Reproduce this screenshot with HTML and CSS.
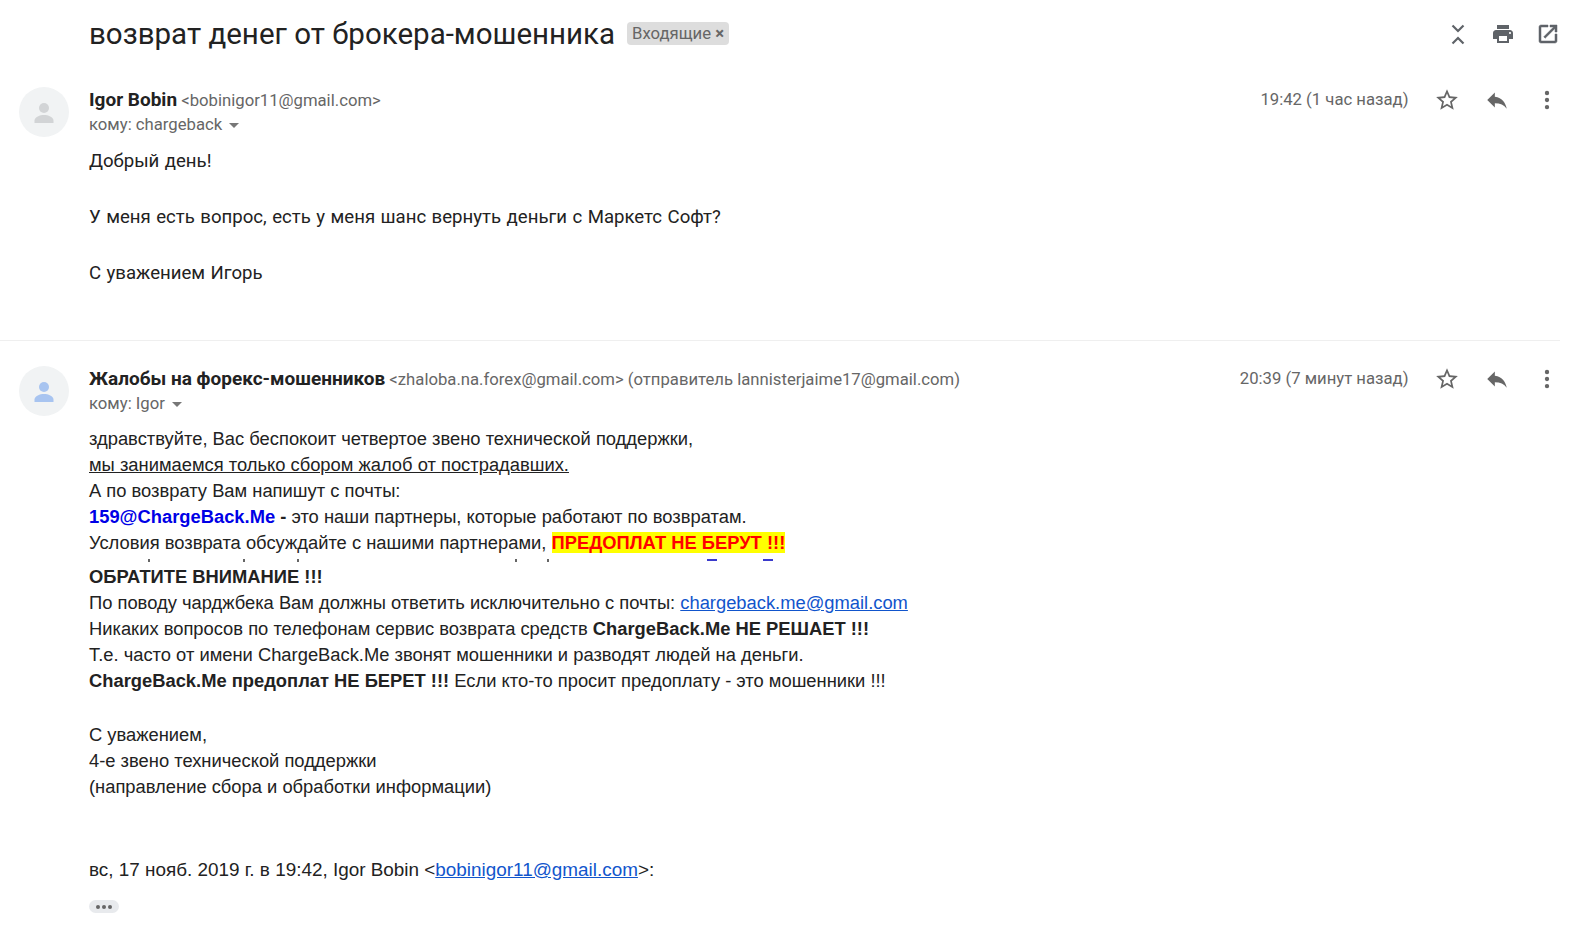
FILE: index.html
```html
<!DOCTYPE html>
<html lang="ru">
<head>
    <meta charset="UTF-8">
    <title>возврат денег от брокера-мошенника</title>
    <link rel="stylesheet" href="styles.css">
</head>
<body>
    <div class="thread">
        <div class="subject-row">
            <h1 class="subject">возврат денег от брокера-мошенника</h1>
            <span class="label">Входящие <span class="label-x">×</span></span>
            <div class="top-icons">
                <svg class="top-icon" viewBox="0 0 24 24"><path class="chevrons" d="M6.500 3.500L12 9 17.500 3.500M6.500 21.500L12 16 17.500 21.500"/></svg>
                <svg class="top-icon" viewBox="0 0 24 24"><path d="M19 8H5c-1.660 0-3 1.340-3 3v6h4v4h12v-4h4v-6c0-1.660-1.340-3-3-3zm-3 11H8v-5h8v5zm3-7c-.550 0-1-.450-1-1s.450-1 1-1 1 .450 1 1-.450 1-1 1zm-1-9H6v4h12V3z"/></svg>
                <svg class="top-icon open" viewBox="0 0 24 24"><path d="M19 19H5V5h7V3H5c-1.110 0-2 .900-2 2v14c0 1.100.890 2 2 2h14c1.100 0 2-.900 2-2v-7h-2v7zM14 3v2h3.590l-9.830 9.830 1.410 1.410L19 6.410V10h2V3h-7z"/></svg>
            </div>
        </div>

        <div class="message first">
            <svg class="avatar grey" viewBox="0 0 50 50"><circle cx="25" cy="25" r="25" fill="#f1f3f4"/><circle cx="25" cy="21" r="5"/><path d="M15.500 36v-2.500c0-3.500 5.500-5.500 9.500-5.500s9.500 2 9.500 5.500v2.500z"/></svg>
            <div class="content">
                <div class="head">
                    <div class="sender">
                        <div class="from"><b class="name">Igor Bobin</b> <span class="addr">&lt;bobinigor11@gmail.com&gt;</span></div>
                        <div class="to">кому: chargeback <span class="caret"></span></div>
                    </div>
                    <span class="time">19:42 (1 час назад)</span>
                    <svg class="act" viewBox="0 0 24 24"><path d="M22 9.240l-7.190-.620L12 2 9.190 8.630 2 9.240l5.460 4.730L5.820 21 12 17.270 18.180 21l-1.630-7.030L22 9.240zM12 15.400l-3.760 2.270 1-4.280-3.320-2.880 4.380-.380L12 6.100l1.710 4.040 4.380.380-3.320 2.880 1 4.280L12 15.400z"/></svg>
                    <svg class="act" viewBox="0 0 24 24"><path d="M10 9V5l-7 7 7 7v-4.100c5 0 8.500 1.600 11 5.100-1-5-4-10-11-11z"/></svg>
                    <svg class="act" viewBox="0 0 24 24"><circle cx="12" cy="5.500" r="2"/><circle cx="12" cy="12" r="2"/><circle cx="12" cy="18.500" r="2"/></svg>
                </div>
                <div class="plain">
                    <p>Добрый день!</p>
                    <p>У меня есть вопрос, есть у меня шанс вернуть деньги с Маркетс Софт?</p>
                    <p>С уважением Игорь</p>
                </div>
            </div>
        </div>

        <div class="message second">
            <svg class="avatar blue" viewBox="0 0 50 50"><circle cx="25" cy="25" r="25" fill="#f1f3f4"/><circle cx="25" cy="21" r="5"/><path d="M15.500 36v-2.500c0-3.500 5.500-5.500 9.500-5.500s9.500 2 9.500 5.500v2.500z"/></svg>
            <div class="content">
                <div class="head">
                    <div class="sender">
                        <div class="from"><b class="name">Жалобы на форекс-мошенников</b> <span class="addr">&lt;zhaloba.na.forex@gmail.com&gt; (отправитель lannisterjaime17@gmail.com)</span></div>
                        <div class="to">кому: Igor <span class="caret"></span></div>
                    </div>
                    <span class="time">20:39 (7 минут назад)</span>
                    <svg class="act" viewBox="0 0 24 24"><path d="M22 9.240l-7.190-.620L12 2 9.190 8.630 2 9.240l5.460 4.730L5.820 21 12 17.270 18.180 21l-1.630-7.030L22 9.240zM12 15.400l-3.760 2.270 1-4.280-3.320-2.880 4.380-.380L12 6.100l1.710 4.040 4.380.380-3.320 2.880 1 4.280L12 15.400z"/></svg>
                    <svg class="act" viewBox="0 0 24 24"><path d="M10 9V5l-7 7 7 7v-4.100c5 0 8.500 1.600 11 5.100-1-5-4-10-11-11z"/></svg>
                    <svg class="act" viewBox="0 0 24 24"><circle cx="12" cy="5.500" r="2"/><circle cx="12" cy="12" r="2"/><circle cx="12" cy="18.500" r="2"/></svg>
                </div>
                <div class="mail">
                    <div>здравствуйте, Вас беспокоит четвертое звено технической поддержки,</div>
                    <div class="under">мы занимаемся только сбором жалоб от пострадавших.</div>
                    <div>А по возврату Вам напишут с почты:</div>
                    <div><b class="partner">159@ChargeBack.Me</b> <b>-</b> это наши партнеры, которые работают по возвратам.</div>
                    <div>Условия возврата обсуждайте с нашими партнерами, <b class="mark">ПРЕДОПЛАТ НЕ БЕРУТ !!!</b></div>
                    <div class="cut"></div>
                    <div><b>ОБРАТИТЕ ВНИМАНИЕ !!!</b></div>
                    <div>По поводу чарджбека Вам должны ответить исключительно с почты: <a href="#">chargeback.me@gmail.com</a></div>
                    <div>Никаких вопросов по телефонам сервис возврата средств <b>ChargeBack.Me НЕ РЕШАЕТ !!!</b></div>
                    <div>Т.е. часто от имени ChargeBack.Me звонят мошенники и разводят людей на деньги.</div>
                    <div><b>ChargeBack.Me предоплат НЕ БЕРЕТ !!!</b> Если кто-то просит предоплату - это мошенники !!!</div>
                    <div class="sign">С уважением,</div>
                    <div>4-е звено технической поддержки</div>
                    <div>(направление сбора и обработки информации)</div>
                    <div class="quote">вс, 17 нояб. 2019 г. в 19:42, Igor Bobin &lt;<a href="#">bobinigor11@gmail.com</a>&gt;:</div>
                    <div class="dots"><i></i><i></i><i></i></div>
                </div>
            </div>
        </div>
    </div>
</body>
</html>
```

FILE: styles.css
```css
body {
    margin: 0;
    background: #fff;
    color: #222;
    font-family: Roboto, Arial, sans-serif;
}

.thread {
    width: 1559.500px;
    height: 948px;
    overflow: hidden;
}

.subject-row {
    display: flex;
    align-items: center;
    height: 67px;
    padding-left: 89px;
}

.subject {
    margin: 0;
    font-size: 29.500px;
    font-weight: 400;
    color: #222;
}

.label {
    margin-left: 12px;
    padding: 0 5px;
    height: 23px;
    line-height: 23px;
    font-size: 16.700px;
    color: #666;
    background: #ddd;
    border-radius: 4px;
}

.label-x {
    font-weight: 700;
}

.top-icons {
    display: flex;
    gap: 21px;
    margin-left: auto;
}

.top-icon {
    width: 24px;
    height: 24px;
    fill: #5f6368;
}

.top-icon.open {
    stroke: #5f6368;
    stroke-width: 0.500;
}

.chevrons {
    fill: none;
    stroke: #5f6368;
    stroke-width: 2.200;
}

.message {
    display: flex;
    padding-left: 19px;
}

.first {
    padding-top: 20px;
    height: 253px;
    border-bottom: 1px solid #efefef;
}

.second {
    padding-top: 25px;
}

.avatar {
    flex: none;
    width: 50px;
    height: 50px;
    margin-right: 20px;
}

.avatar.grey {
    fill: #d2d4d6;
}

.avatar.blue {
    fill: #a8c4f0;
}

.content {
    flex: 1;
}

.head {
    display: flex;
    align-items: flex-start;
}

.sender {
    flex: 1;
    font-size: 16.700px;
}

.from {
    height: 25px;
    line-height: 25px;
}

.name {
    font-size: 19px;
    font-weight: 700;
    color: #222;
}

.addr {
    color: #666;
}

.to {
    height: 25px;
    line-height: 25px;
    color: #666;
}

.caret {
    display: inline-block;
    margin-left: 3px;
    vertical-align: middle;
    border: 5px solid transparent;
    border-top-color: #777;
    border-bottom: 0;
}

.time {
    font-size: 16.700px;
    line-height: 25px;
    color: #666;
    margin-right: 25px;
}

.act {
    width: 26px;
    height: 26px;
    margin-left: 24px;
    fill: #666;
}

.time + .act {
    margin-left: 0;
}

.plain {
    margin-top: 10px;
    font-size: 18.600px;
    word-spacing: 0.850px;
    line-height: 28px;
}

.plain p {
    margin: 0 0 28px;
}

.mail {
    margin-top: 10px;
    font-family: "Liberation Sans", Arial, sans-serif;
    font-size: 18.350px;
    line-height: 26px;
    color: #222;
}

.under {
    text-decoration: underline;
}

.partner {
    color: #0000e6;
}

.mark {
    color: #f00;
    background: #ff0;
}

/* the screenshot is spliced here, only the tops of one line of letters are left */
.cut {
    height: 8px;
    background:
        linear-gradient(#666, #666) 59px 3px / 2px 3px no-repeat,
        linear-gradient(#666, #666) 154px 3px / 2px 3px no-repeat,
        linear-gradient(#666, #666) 208px 3px / 2px 3px no-repeat,
        linear-gradient(#666, #666) 426px 3px / 2px 3px no-repeat,
        linear-gradient(#666, #666) 458px 3px / 2px 3px no-repeat,
        linear-gradient(#3a3acc, #3a3acc) 618px 3px / 10px 2px no-repeat,
        linear-gradient(#3a3acc, #3a3acc) 674px 3px / 10px 2px no-repeat;
}

.mail a {
    color: #15c;
}

.sign {
    margin-top: 28px;
}

.quote {
    margin-top: 57px;
    font-size: 18.900px;
}

.dots {
    display: inline-flex;
    gap: 2px;
    align-items: center;
    justify-content: center;
    width: 30px;
    height: 13px;
    margin-top: 17px;
    background: #e8eaed;
    border-radius: 7px;
}

.dots i {
    width: 4px;
    height: 4px;
    background: #666;
    border-radius: 50%;
}
```
